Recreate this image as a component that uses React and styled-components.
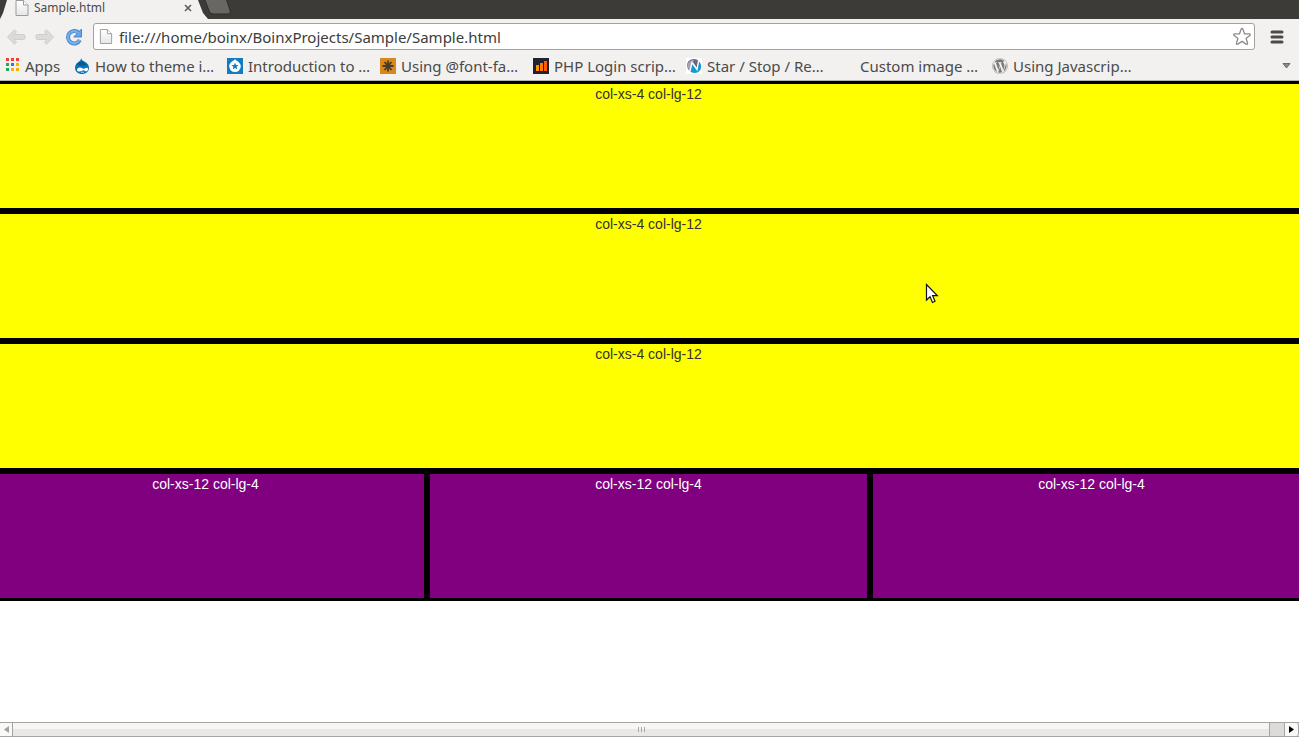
import React from "react";
import styled, { createGlobalStyle } from "styled-components";
import { FaWordpress } from "react-icons/fa";

const GlobalStyle = createGlobalStyle`
  * { box-sizing: border-box; }
  html, body { margin: 0; height: 100%; overflow: hidden; background: #fff; }
  button { padding: 0; border: 0; background: none; font: inherit; color: inherit; }
  svg { display: block; flex: none; }
`;

const Window = styled.div`
  display: flex;
  flex-direction: column;
  height: 100vh;
  overflow: hidden;
  font-family: "Noto Sans", "Open Sans", sans-serif;
  color: #4a4a4a;
`;

const TabStrip = styled.header`
  display: flex;
  flex: none;
  height: 19px;
  background: #3c3b37;
`;

const Tab = styled.div`
  display: flex;
  align-items: center;
  gap: 5px;
  width: 208px;
  height: 19px;
  padding: 0 15px 4px 15px;
  background: #f2f1f0;
  clip-path: polygon(7px 0, 198px 0, 203px 13px, 208px 19px, 0 19px, 3px 13px);
  font-size: 12px;
  line-height: 16px;
`;

const TabTitle = styled.span`
  flex: 1;
`;

const NewTab = styled.button`
  width: 28px;
  height: 15px;
  margin-left: -4px;
`;

const Toolbar = styled.nav`
  display: flex;
  align-items: center;
  flex: none;
  height: 35px;
  padding: 0 12px 0 5px;
  background: #f2f1f0;
`;

const ToolButton = styled.button`
  display: grid;
  place-items: center;
  width: 22px;
  height: 22px;
  margin-right: ${(p) => p.$gap || 7}px;
`;

const AddressBar = styled.form`
  display: flex;
  align-items: center;
  flex: 1;
  gap: 6px;
  height: 27px;
  margin-right: 12px;
  padding: 0 2px 0 5px;
  border: 1px solid #a3a19e;
  border-radius: 3px;
  background: #fff;
`;

const Address = styled.input`
  flex: 1;
  min-width: 0;
  padding: 0;
  border: 0;
  outline: 0;
  background: none;
  font-family: inherit;
  font-size: 15px;
  line-height: 20px;
  color: #3c3c3c;
`;

const Bookmarks = styled.nav`
  display: flex;
  align-items: center;
  flex: none;
  height: 27px;
  padding: 0 8px 2px 5px;
  background: #f2f1f0;
  border-bottom: 1px solid #b6b4b2;
`;

const Bookmark = styled.a`
  display: flex;
  align-items: center;
  flex: 0 0 ${(p) => p.$width || 153}px;
  gap: 5px;
  font-size: 15px;
  line-height: 20px;
  white-space: nowrap;
  color: #4a4a4a;
  text-decoration: none;
`;

const IconSlot = styled.span`
  flex: none;
  width: 16px;
  height: 16px;
`;

const MoreButton = styled.button`
  margin-left: auto;
`;

const Page = styled.main`
  flex: 1;
  min-height: 0;
  overflow: hidden;
  background: #fff;
  font-family: "Liberation Sans", Arial, sans-serif;
  font-size: 14px;
  line-height: 20px;
`;

const Row = styled.div`
  display: flex;
  flex-wrap: wrap;
  margin: 0 -14px 0 -16px;
`;

const Column = styled.div`
  flex: 0 0 ${(p) => (p.$span * 100) / 12}%;
  height: 130px;
  border: 3px solid #000;
  background: ${(p) => (p.$tone === "purple" ? "#800080" : "#ff0")};
  color: ${(p) => (p.$tone === "purple" ? "#fff" : "#333")};
  text-align: center;
`;

const Scrollbar = styled.footer`
  display: flex;
  flex: none;
  height: 15px;
  border: solid #a6a4a1;
  border-width: 1px 0;
  background: #dcdbd9;
`;

const ScrollButton = styled.button`
  display: grid;
  place-items: center;
  width: ${(p) => (p.$end ? 15 : 12)}px;
  background: #f9f9f8;
  border: solid #a6a4a1;
  border-width: ${(p) => (p.$end ? "0 1px" : "0")};
  border-radius: ${(p) => (p.$end ? "0 3px 3px 0" : "0")};
`;

const Thumb = styled.div`
  display: flex;
  align-items: center;
  justify-content: center;
  gap: 2px;
  flex: 1;
  margin-right: 14px;
  border: solid #a6a4a1;
  border-width: 0 1px;
  background: linear-gradient(#f7f6f5 50%, #eae8e6 50%);
`;

const Grip = styled.span`
  width: 1px;
  height: 5px;
  background: #aaa8a5;
`;

const Cursor = styled.svg`
  position: absolute;
  left: 925px;
  top: 283px;
  pointer-events: none;
`;

const PageIcon = ({ h = 16 }) => (
  <svg width="14" height={h} viewBox="0 0 14 16">
    <defs>
      <linearGradient id="sheet" x1="0" y1="0" x2="0" y2="1">
        <stop offset="0" stopColor="#fff" />
        <stop offset="1" stopColor="#e6e6e6" />
      </linearGradient>
    </defs>
    <path d="M1 .5h7.5L13 5v10.5H1z" fill="url(#sheet)" stroke="#9a9a9a" />
    <path d="M8.5.5V5H13" fill="#fff" stroke="#9a9a9a" />
  </svg>
);

const Arrow = ({ flip }) => (
  <svg width="20" height="18" viewBox="0 0 20 18">
    <path
      d="M8.500 1.800 1.500 9l7 7.200 2-2-2.500-2.700H17.500a1.400 1.400 0 0 0 1.400-1.400v-2.200A1.400 1.400 0 0 0 17.500 6.500H8l2.500-2.700z"
      transform={flip ? "matrix(-1 0 0 1 20 0)" : undefined}
      fill="#dddbd9"
      stroke="#cfcdcb"
      strokeLinejoin="round"
    />
  </svg>
);

const Reload = () => (
  <svg width="18" height="18" viewBox="0 0 18 18">
    <path d="M13.6 4.8A6.2 6.2 0 1 0 14.8 12" fill="none" stroke="#4786cd" strokeWidth="4" />
    <path d="M16.5 1v8H8.7z" fill="#6aa5e4" stroke="#4786cd" strokeLinejoin="round" />
    <path d="M13.4 5A6.1 6.1 0 1 0 14.5 12" fill="none" stroke="#76b0ea" strokeWidth="2.2" />
  </svg>
);

const Apps = () => {
  const colors = ["#ee4035", "#ee4035", "#ee4035", "#26a65b", "#2b7de0", "#f5b400", "#26a65b", "#f5b400", "#f5b400"];
  return (
    <svg width="15" height="16" viewBox="0 0 15 16">
      {colors.map((c, i) => (
        <rect key={i} x={1 + (i % 3) * 5} y={Math.floor(i / 3) * 5} width="3" height="3" fill={c} />
      ))}
    </svg>
  );
};

const Drupal = () => (
  <svg width="16" height="16" viewBox="0 0 16 16">
    <path d="M7 0c.5 2 1.8 2.5 3.8 3.7C13.500 5.300 15 7 15 9.700 15 13.500 12 16 8 16S1 13.500 1 9.700C1 7.200 2.500 5 4.700 3.700 6.200 2.800 7 1.800 7 0z" fill="#0b72b5" />
    <path d="M2.500 6c1.500-1.500 4-1.500 5.500-3 1.500 1.500 3.500 2 5 4.500-3-1-7 1.500-10.500-1.500z" fill="#075a91" />
    <path d="M3 12c0-1.500 1.300-2.500 2.900-2.500 1.700 0 2.600 1.300 3.600 1.300 1 0 2.300-1.500 3.700-1.100 1.400.5 1 3.300-.8 3.600-1.300.2-2.200-1.200-3.200-1.100-1.100.1-1.900 1.300-3.500 1.300C4.100 13.500 3 13.100 3 12z" fill="#fff" />
    <path d="M7 14.700c1-.8 2.200-.8 3 0" fill="none" stroke="#fff" strokeWidth=".8" />
  </svg>
);

const StarDrop = () => (
  <svg width="16" height="16" viewBox="0 0 16 16">
    <path d="M0 0h16v16H0z" fill="#127bc2" />
    <path d="M8 1c1 2 5.800 3 5.800 7.300a5.800 5.800 0 0 1-11.600 0C2.200 4 7 3 8 1z" fill="#fff" />
    <path d="m8 4.700 1 2.200 2.500.2-1.900 1.700.6 2.500L8 10l-2.200 1.300.6-2.500-1.900-1.700 2.500-.2z" fill="#127bc2" />
  </svg>
);

const Asterisk = () => (
  <svg width="16" height="16" viewBox="0 0 16 16">
    <path d="M0 0h16v16H0z" fill="#d9861a" />
    <path d="M8 2.500v11M2.500 8h11M4.500 4l7 8M11.500 4l-7 8" stroke="#473b2c" strokeWidth="1.800" />
  </svg>
);

const Bars = () => (
  <svg width="16" height="16" viewBox="0 0 16 16">
    <path d="M0 0h16v16H0z" fill="#20232f" />
    <path d="M3 7h3v6H3z" fill="#ff9100" />
    <path d="M7 5h3v8H7z" fill="#ff7a00" />
    <path d="M11 3h3v10h-3z" fill="#ff5a00" />
  </svg>
);

const Ribbon = () => (
  <svg width="16" height="16" viewBox="0 0 16 16">
    <path d="M0 0h16v16H0z" fill="#fff" />
    <path d="M3 12.500C-.5 8 1 1 8 1c2 0 3.500.7 4.500 2L11 10 7 4.500 5.500 5z" fill="#69687c" />
    <path d="M1.500 8C1.500 4.500 4.500 2 8 2L4 12.500C2.500 11 1.500 10 1.500 8z" fill="#a6a5b2" />
    <path d="M13 3.500C17 7 15.500 15 8.500 15c-2 0-3.500-.8-4.500-2L6 5l5 6.500z" fill="#1598d3" />
    <path d="M4 13 6 4.500l5 7L12.500 3" fill="none" stroke="#fff" strokeWidth="1.300" />
  </svg>
);

const Star = () => (
  <svg width="20" height="20" viewBox="0 0 20 20">
    <path d="M10 1.500c.6 0 .8.5 1 1l1.500 4.300 4.700.1c1.300.1 1.500 1 .6 1.700l-3.700 2.900 1.400 4.500c.4 1.300-.5 1.800-1.400 1.100L10 14.400l-4.100 2.700c-.9.700-1.800.2-1.400-1.100l1.400-4.500-3.700-2.900c-.9-.7-.7-1.600.6-1.700l4.700-.1L9 2.500c.2-.5.4-1 1-1z" fill="#fff" stroke="#8c8c8c" strokeWidth="1.300" />
  </svg>
);

const bookmarks = [
  { label: "How to theme i…", icon: <Drupal /> },
  { label: "Introduction to …", icon: <StarDrop /> },
  { label: "Using @font-fa…", icon: <Asterisk /> },
  { label: "PHP Login scrip…", icon: <Bars /> },
  { label: "Star / Stop / Re…", icon: <Ribbon /> },
  { label: "Custom image …", icon: null },
  { label: "Using Javascrip…", icon: <FaWordpress size={16} color="#7b7b7b" /> },
];

const columns = [
  { span: 12, tone: "yellow", label: "col-xs-4 col-lg-12" },
  { span: 12, tone: "yellow", label: "col-xs-4 col-lg-12" },
  { span: 12, tone: "yellow", label: "col-xs-4 col-lg-12" },
  { span: 4, tone: "purple", label: "col-xs-12 col-lg-4" },
  { span: 4, tone: "purple", label: "col-xs-12 col-lg-4" },
  { span: 4, tone: "purple", label: "col-xs-12 col-lg-4" },
];

export default function App() {
  return (
    <Window>
      <GlobalStyle />
      <TabStrip>
        <Tab>
          <PageIcon />
          <TabTitle>Sample.html</TabTitle>
          <button aria-label="Close tab">
            <svg width="10" height="10" viewBox="0 0 10 10">
              <path d="m2 2 6 6M8 2 2 8" stroke="#5c5c5c" strokeWidth="1.600" />
            </svg>
          </button>
        </Tab>
        <NewTab aria-label="New tab">
          <svg width="28" height="15" viewBox="0 0 28 15">
            <path d="M.5-1H20c1.500 0 2.300.5 3 2l3 9.500c.6 2.300-.2 3.500-2 3.500H10c-2.500 0-3.800-.8-4.800-3z" fill="#686764" stroke="#2e2d2a" />
          </svg>
        </NewTab>
      </TabStrip>
      <Toolbar>
        <ToolButton aria-label="Back"><Arrow /></ToolButton>
        <ToolButton aria-label="Forward"><Arrow flip /></ToolButton>
        <ToolButton aria-label="Reload" $gap={8}><Reload /></ToolButton>
        <AddressBar onSubmit={(e) => e.preventDefault()}>
          <PageIcon h={15} />
          <Address aria-label="Address" defaultValue="file:///home/boinx/BoinxProjects/Sample/Sample.html" />
          <button type="button" aria-label="Bookmark this page"><Star /></button>
        </AddressBar>
        <button aria-label="Menu">
          <svg width="20" height="16" viewBox="0 0 20 16">
            <path d="M5 3h10M5 8h10M5 13h10" stroke="#4a4a4a" strokeWidth="3" strokeLinecap="round" />
          </svg>
        </button>
      </Toolbar>
      <Bookmarks>
        <Bookmark href="#apps" $width={69}>
          <Apps />
          Apps
        </Bookmark>
        {bookmarks.map((b) => (
          <Bookmark key={b.label} href="#bookmark">
            <IconSlot>{b.icon}</IconSlot>
            {b.label}
          </Bookmark>
        ))}
        <MoreButton aria-label="More bookmarks">
          <svg width="9" height="6" viewBox="0 0 9 6">
            <path d="M1 .5h7L4.500 5z" fill="#8a8a8a" stroke="#6b6b6b" />
          </svg>
        </MoreButton>
      </Bookmarks>
      <Page>
        <Row>
          {columns.map((c, i) => (
            <Column key={i} $span={c.span} $tone={c.tone}>{c.label}</Column>
          ))}
        </Row>
      </Page>
      <Scrollbar>
        <ScrollButton aria-label="Scroll left">
          <svg width="5" height="7" viewBox="0 0 5 7"><path d="M5 0v7L0 3.500z" fill="#a3a19e" /></svg>
        </ScrollButton>
        <Thumb><Grip /><Grip /><Grip /></Thumb>
        <ScrollButton $end aria-label="Scroll right">
          <svg width="5" height="7" viewBox="0 0 5 7"><path d="M0 0v7l5-3.500z" fill="#000" /></svg>
        </ScrollButton>
      </Scrollbar>
      <Cursor width="16" height="22" viewBox="0 0 16 22" aria-hidden="true">
        <path d="M1.500 1.500v15.500l3.500-3.300 2.500 5.800 2.500-1.200-2.400-5.600h4.700z" fill="#fff" stroke="#111" strokeWidth="1.200" />
      </Cursor>
    </Window>
  );
}
